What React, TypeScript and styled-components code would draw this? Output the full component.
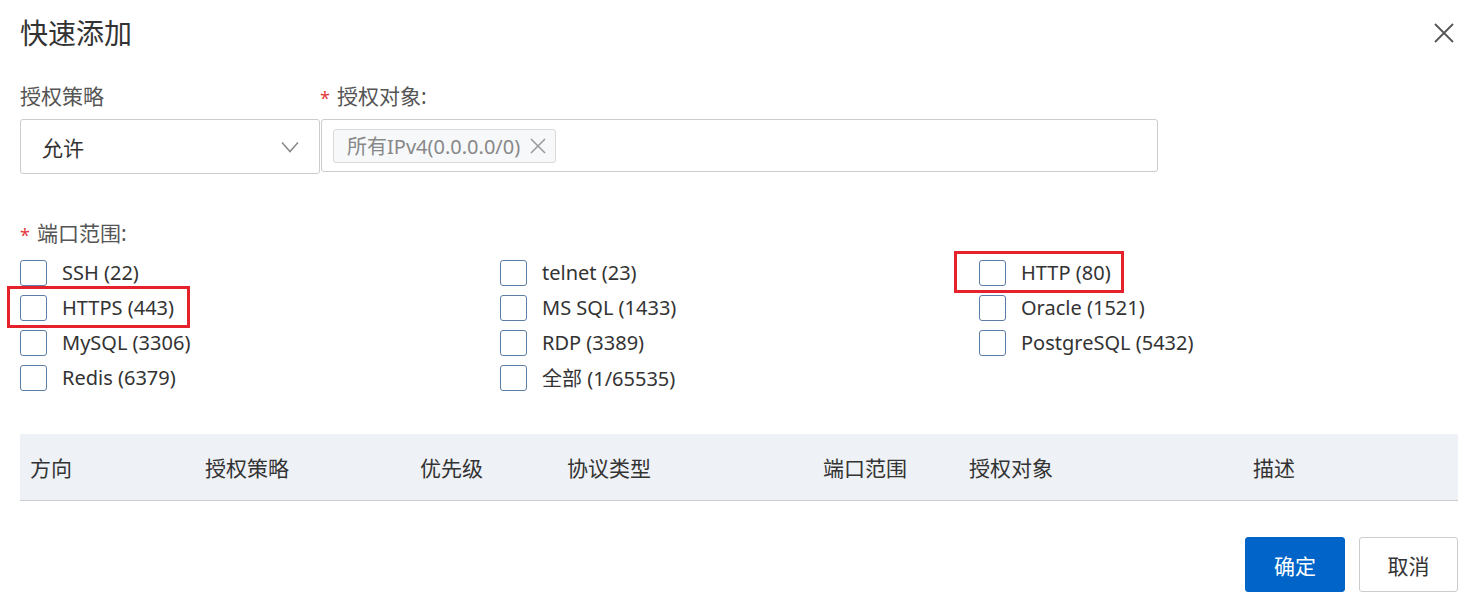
import React from "react";
import styled, { createGlobalStyle } from "styled-components";

const GlobalStyle = createGlobalStyle`
  html, body {
    margin: 0;
    padding: 0;
    background: #fff;
  }
  body {
    font-family: "Noto Sans", "Noto Sans CJK SC", sans-serif;
    color: #333;
  }
`;

const Dialog = styled.div`
  width: 1478px;
  box-sizing: border-box;
  padding: 0 20px;
`;

const Header = styled.div`
  height: 66px;
  display: flex;
  align-items: center;
  justify-content: space-between;
`;

const Title = styled.h1`
  margin: 0;
  font-size: 28px;
  font-weight: 400;
  color: #333;
  line-height: 40px;
`;

const CloseButton = styled.button`
  border: none;
  background: none;
  padding: 0;
  margin-right: 4px;
  width: 20px;
  height: 20px;
  display: flex;
  cursor: pointer;
`;

const FieldRow = styled.div`
  display: flex;
  align-items: flex-start;
  margin-top: 18px;
`;

const Field = styled.div<{ $width: number }>`
  width: ${(p) => p.$width}px;
  display: flex;
  flex-direction: column;
`;

const Label = styled.div`
  font-size: 21px;
  line-height: 24px;
  color: #555;
  margin-bottom: 11px;
  display: flex;
  align-items: center;
`;

const Required = styled.span`
  color: #e4393c;
  font-size: 18px;
  margin-right: 7px;
  position: relative;
  top: 2px;
`;

const Select = styled.div`
  height: 55px;
  box-sizing: border-box;
  border: 1px solid #ccc;
  border-radius: 3px;
  display: flex;
  align-items: center;
  justify-content: space-between;
  padding: 0 20px 0 21px;
  font-size: 21px;
  color: #333;
`;

const TargetBox = styled.div`
  height: 53px;
  margin-left: 1px;
  box-sizing: border-box;
  border: 1px solid #ccc;
  border-radius: 3px;
  display: flex;
  align-items: center;
  padding: 0 11px;
`;

const Tag = styled.span`
  height: 34px;
  box-sizing: border-box;
  display: inline-flex;
  align-items: center;
  gap: 9px;
  padding: 0 8px 0 13px;
  background: #f7f8fa;
  border: 1px solid #d9d9d9;
  border-radius: 3px;
  font-size: 20px;
  color: #888;
`;

const PortSection = styled.div`
  margin-top: 47px;
`;

const PortLabel = styled(Label)`
  margin-bottom: 10px;
`;

const CheckGrid = styled.div`
  display: grid;
  grid-template-columns: 480px 479px 1fr;
  grid-auto-rows: 35px;
`;

const CheckItem = styled.label<{ $mark?: [number, number] }>`
  position: relative;
  align-self: center;
  justify-self: start;
  display: inline-flex;
  align-items: center;
  gap: 15px;
  height: 35px;
  font-size: 20px;
  color: #333;
  cursor: pointer;

  ${(p) =>
    p.$mark &&
    `
    &::after {
      content: "";
      position: absolute;
      top: -4px;
      bottom: -3px;
      left: -${p.$mark[0]}px;
      right: -${p.$mark[1]}px;
      border: 3px solid #e5212b;
      pointer-events: none;
    }
  `}
`;

const Box = styled.span`
  width: 27px;
  height: 26px;
  box-sizing: border-box;
  border: 1.5px solid #5d7ea6;
  border-radius: 3px;
  background: #fff;
  flex-shrink: 0;
`;

const Table = styled.div`
  margin-top: 39px;
  display: grid;
  grid-template-columns: 175px 215px 147px 256px 146px 284px 1fr;
  height: 67px;
  box-sizing: border-box;
  background: #eef1f5;
  border-bottom: 1px solid #ccc;
  border-radius: 2px 2px 0 0;
  align-items: center;
`;

const Th = styled.div`
  padding-left: 10px;
  font-size: 21px;
  color: #333;
`;

const Footer = styled.div`
  display: flex;
  justify-content: flex-end;
  gap: 14px;
  margin-top: 36px;
`;

const Button = styled.button<{ $primary?: boolean }>`
  width: ${(p) => (p.$primary ? 100 : 99)}px;
  height: 55px;
  box-sizing: border-box;
  border-radius: 3px;
  font-family: inherit;
  font-size: 21px;
  cursor: pointer;
  border: 1px solid ${(p) => (p.$primary ? "#0064c8" : "#ccc")};
  background: ${(p) => (p.$primary ? "#0064c8" : "#fff")};
  color: ${(p) => (p.$primary ? "#fff" : "#333")};
`;

const ports: { text: string; mark?: [number, number] }[] = [
  { text: "SSH (22)" },
  { text: "telnet (23)" },
  { text: "HTTP (80)", mark: [25, 13] },
  { text: "HTTPS (443)", mark: [13, 16] },
  { text: "MS SQL (1433)" },
  { text: "Oracle (1521)" },
  { text: "MySQL (3306)" },
  { text: "RDP (3389)" },
  { text: "PostgreSQL (5432)" },
  { text: "Redis (6379)" },
  { text: "全部 (1/65535)" },
];

const columns = ["方向", "授权策略", "优先级", "协议类型", "端口范围", "授权对象", "描述"];

export default function App() {
  return (
    <>
      <GlobalStyle />
      <Dialog>
        <Header>
          <Title>快速添加</Title>
          <CloseButton aria-label="关闭">
            <svg width="20" height="20" viewBox="0 0 20 20">
              <path d="M1 1L19 19M19 1L1 19" stroke="#555" strokeWidth="1.8" fill="none" />
            </svg>
          </CloseButton>
        </Header>

        <FieldRow>
          <Field $width={300}>
            <Label>授权策略</Label>
            <Select>
              <span>允许</span>
              <svg width="18" height="12" viewBox="0 0 18 12">
                <path d="M1 1.5L9 10.5L17 1.5" stroke="#888" strokeWidth="1.5" fill="none" />
              </svg>
            </Select>
          </Field>
          <Field $width={838}>
            <Label>
              <Required>*</Required>授权对象:
            </Label>
            <TargetBox>
              <Tag>
                所有IPv4(0.0.0.0/0)
                <svg width="18" height="18" viewBox="0 0 18 18">
                  <path d="M2 2L16 16M16 2L2 16" stroke="#999" strokeWidth="1.5" fill="none" />
                </svg>
              </Tag>
            </TargetBox>
          </Field>
        </FieldRow>

        <PortSection>
          <PortLabel>
            <Required>*</Required>端口范围:
          </PortLabel>
          <CheckGrid>
            {ports.map((p) => (
              <CheckItem key={p.text} $mark={p.mark}>
                <Box />
                {p.text}
              </CheckItem>
            ))}
          </CheckGrid>
        </PortSection>

        <Table>
          {columns.map((c) => (
            <Th key={c}>{c}</Th>
          ))}
        </Table>

        <Footer>
          <Button $primary>确定</Button>
          <Button>取消</Button>
        </Footer>
      </Dialog>
    </>
  );
}
